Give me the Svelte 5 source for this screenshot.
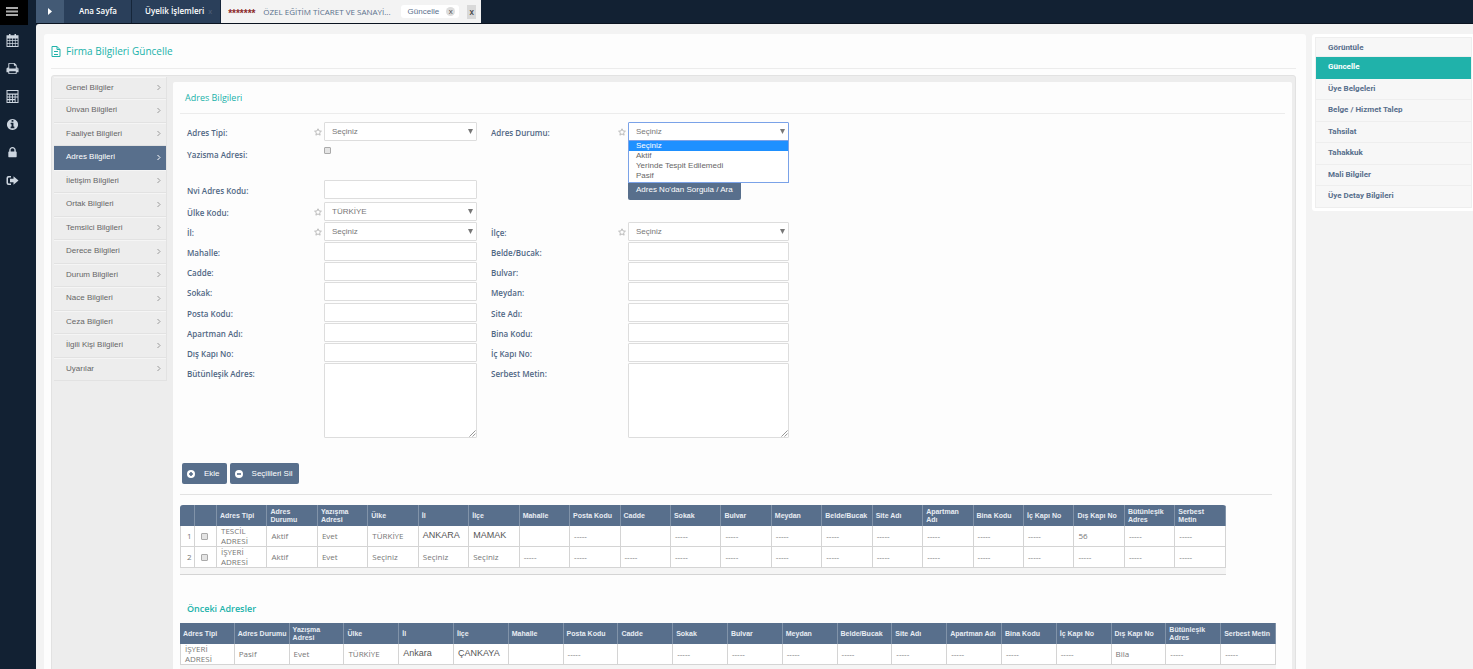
<script>
  const menu = [
    'Genel Bilgiler', 'Ünvan Bilgileri', 'Faaliyet Bilgileri', 'Adres Bilgileri',
    'İletişim Bilgileri', 'Ortak Bilgileri', 'Temsilci Bilgileri', 'Derece Bilgileri',
    'Durum Bilgileri', 'Nace Bilgileri', 'Ceza Bilgileri', 'İlgili Kişi Bilgileri', 'Uyarılar',
  ]

  const actions = [
    'Görüntüle', 'Güncelle', 'Üye Belgeleri', 'Belge / Hizmet Talep',
    'Tahsilat', 'Tahakkuk', 'Mali Bilgiler', 'Üye Detay Bilgileri',
  ]

  // one entry per grid row, left and right field
  const rows = [
    [{ label: 'Adres Tipi', type: 'select', required: true }, { label: 'Adres Durumu', type: 'select', required: true, open: true }],
    [{ label: 'Yazisma Adresi', type: 'checkbox' }, null],
    [{ label: 'Nvi Adres Kodu', type: 'text' }, { type: 'button' }],
    [{ label: 'Ülke Kodu', type: 'select', value: 'TÜRKİYE', required: true }, null],
    [{ label: 'İl', type: 'select', required: true }, { label: 'İlçe', type: 'select', required: true }],
    [{ label: 'Mahalle', type: 'text' }, { label: 'Belde/Bucak', type: 'text' }],
    [{ label: 'Cadde', type: 'text' }, { label: 'Bulvar', type: 'text' }],
    [{ label: 'Sokak', type: 'text' }, { label: 'Meydan', type: 'text' }],
    [{ label: 'Posta Kodu', type: 'text' }, { label: 'Site Adı', type: 'text' }],
    [{ label: 'Apartman Adı', type: 'text' }, { label: 'Bina Kodu', type: 'text' }],
    [{ label: 'Dış Kapı No', type: 'text' }, { label: 'İç Kapı No', type: 'text' }],
    [{ label: 'Bütünleşik Adres', type: 'textarea' }, { label: 'Serbest Metin', type: 'textarea' }],
  ]

  const statuses = ['Seçiniz', 'Aktif', 'Yerinde Tespit Edilemedi', 'Pasif']

  const columns = [
    'Adres Tipi', 'Adres Durumu', 'Yazışma Adresi', 'Ülke', 'İl', 'İlçe', 'Mahalle',
    'Posta Kodu', 'Cadde', 'Sokak', 'Bulvar', 'Meydan', 'Belde/Bucak', 'Site Adı',
    'Apartman Adı', 'Bina Kodu', 'İç Kapı No', 'Dış Kapı No', 'Bütünleşik Adres', 'Serbest Metin',
  ]

  const d = '-----'
  const current = [
    ['TESCİL ADRESİ', 'Aktif', 'Evet', 'TÜRKİYE', 'ANKARA', 'MAMAK', '', d, '', d, d, d, d, d, d, d, d, '56', d, d],
    ['İŞYERİ ADRESİ', 'Aktif', 'Evet', 'Seçiniz', 'Seçiniz', 'Seçiniz', d, d, d, d, d, d, d, d, d, d, d, d, d, d],
  ]
  const previous = [
    ['İŞYERİ ADRESİ', 'Pasif', 'Evet', 'TÜRKİYE', 'Ankara', 'ÇANKAYA', '', d, '', d, d, d, d, d, d, d, d, 'Bila', d, d],
  ]

  const isCity = (row, i) => (i === 4 || i === 5) && row[i] !== 'Seçiniz'
</script>

{#snippet field(f, id)}
  {#if f?.type === 'button'}
    <span></span><span></span>
    <div><button class="btn query">Adres No'dan Sorgula / Ara</button></div>
  {:else if f}
    <label for={id}>{f.label}:</label>
    <span class="star">
      {#if f.required}
        <svg viewBox="0 0 16 16"><path d="M8 1.5l2 4.4 4.8.5-3.6 3.2 1 4.7L8 11.9l-4.2 2.4 1-4.7L1.2 6.4 6 5.9z" /></svg>
      {/if}
    </span>
    <div class="control">
      {#if f.type === 'select'}
        <select {id} class:open={f.open}>
          {#if f.open}
            {#each statuses as status}<option>{status}</option>{/each}
          {:else}
            <option>{f.value ?? 'Seçiniz'}</option>
          {/if}
        </select>
        <svg class="caret" viewBox="0 0 6 6"><path d="M0 0h6L3 6z" /></svg>
        {#if f.open}
          <ul class="options">
            {#each statuses as status, i}
              <li class:selected={i === 0}>{status}</li>
            {/each}
          </ul>
        {/if}
      {:else if f.type === 'checkbox'}
        <input {id} type="checkbox" />
      {:else if f.type === 'textarea'}
        <textarea {id}></textarea>
        <svg class="grip" viewBox="0 0 8 8"><path d="M0.5 7.5l7-7M4 7.5l3.5-3.5" /></svg>
      {:else}
        <input {id} type="text" />
      {/if}
    </div>
  {:else}
    <span></span><span></span><span></span>
  {/if}
{/snippet}

{#snippet cells(row)}
  {#each row as value, i}
    <td class:city={isCity(row, i)}>{value}</td>
  {/each}
{/snippet}

<div class="app">
  <nav class="rail">
    <button class="burger" aria-label="Menü">
      <svg viewBox="0 0 12 9"><path d="M0 0h12v2H0zM0 3.5h12v2H0zM0 7h12v2H0z" /></svg>
    </button>
    <a href="#takvim" aria-label="Takvim">
      <svg viewBox="0 0 13 13"><path fill-rule="evenodd" d="M3 0h1.5v1.3h4V0H10v1.3h2.5V13H.5V1.3H3zM1.5 4.5v1.8h2V4.5zm2.7 0v1.8h2V4.5zm2.7 0v1.8h2V4.5zm2.7 0v1.8h2V4.5zM1.5 7.1v1.8h2V7.1zm2.7 0v1.8h2V7.1zm2.7 0v1.8h2V7.1zm2.7 0v1.8h2V7.1zM1.5 9.8V12h2V9.8zm2.7 0V12h2V9.8zm2.7 0V12h2V9.8zm2.7 0V12h2V9.8z" /></svg>
    </a>
    <a href="#yazdir" aria-label="Yazdır">
      <svg viewBox="0 0 1792 1792"><path d="M448 1536h896v-256h-896v256zm0-640h896v-384h-160q-40 0-68-28t-28-68v-160h-640v640zm1152 64q0-26-19-45t-45-19-45 19-19 45 19 45 45 19 45-19 19-45zm128 0v416q0 13-9.5 22.5t-22.5 9.5h-224v160q0 40-28 68t-68 28h-960q-40 0-68-28t-28-68v-160h-224q-13 0-22.5-9.5t-9.5-22.5v-416q0-79 56.5-135.5t135.5-56.5h64v-544q0-40 28-68t68-28h672q40 0 88 20t76 48l152 152q28 28 48 76t20 88v256h64q79 0 135.5 56.5t56.5 135.5z" /></svg>
    </a>
    <a href="#hesap" aria-label="Hesap">
      <svg viewBox="0 0 13 13"><path fill-rule="evenodd" d="M.5 0h12v13H.5zM1.5 1v2.5h10V1zM1.5 4.8v1.6h1.8V4.8zm2.7 0v1.6H6V4.8zm2.7 0v1.6h1.8V4.8zm2.7 0v1.6h1.9V4.8zM1.5 7.4V9h1.8V7.4zm2.7 0V9H6V7.4zm2.7 0V9h1.8V7.4zM1.5 10.2v1.7h1.8v-1.7zm2.7 0v1.7H6v-1.7zm2.7 0v1.7h1.8v-1.7zm2.7-2.8v4.5h1.9V7.4z" /></svg>
    </a>
    <a href="#bilgi" aria-label="Bilgi">
      <svg viewBox="0 0 1792 1792"><path d="M1152 1376v-160q0-14-9-23t-23-9h-96v-512q0-14-9-23t-23-9h-320q-14 0-23 9t-9 23v160q0 14 9 23t23 9h96v320h-96q-14 0-23 9t-9 23v160q0 14 9 23t23 9h448q14 0 23-9t9-23zm-128-896v-160q0-14-9-23t-23-9h-192q-14 0-23 9t-9 23v160q0 14 9 23t23 9h192q14 0 23-9t9-23zm640 416q0 209-103 385.5t-279.5 279.5-385.5 103-385.5-103-279.5-279.5-103-385.5 103-385.5 279.5-279.5 385.5-103 385.5 103 279.5 279.5 103 385.5z" /></svg>
    </a>
    <a href="#kilit" aria-label="Kilitle">
      <svg viewBox="0 0 1792 1792"><path d="M640 768h512v-192q0-106-75-181t-181-75-181 75-75 181v192zm832 96v576q0 40-28 68t-68 28h-960q-40 0-68-28t-28-68v-576q0-40 28-68t68-28h32v-192q0-184 132-316t316-132 316 132 132 316v192h32q40 0 68 28t28 68z" /></svg>
    </a>
    <a href="#cikis" aria-label="Çıkış">
      <svg viewBox="0 0 13 13"><path d="M5 2v1.5H3Q2 3.500 2 4.5v4q0 1 1 1h2V11H2.500Q.5 11 .5 9V4Q.5 2 2.500 2zM7.500 2.200l5 4.300-5 4.300V8.300H4V4.700h3.500z" /></svg>
    </a>
  </nav>

  <div class="page">
    <header>
      <button class="arrow" aria-label="İleri">
        <svg viewBox="0 0 4 7"><path d="M0 0l4 3.5L0 7z" /></svg>
      </button>
      <a href="#anasayfa">Ana Sayfa</a>
      <a class="wide" href="#uyelik">Üyelik İşlemleri <small>x</small></a>
      <div class="tab">
        <b>*******</b>
        <span class="firm">ÖZEL EĞİTİM TİCARET VE SANAYİ...</span>
        <span class="pill">Güncelle <button aria-label="Güncelle kapat">x</button></span>
        <button class="close">x</button>
      </div>
    </header>

    <div class="content">
      <main>
        <h1>
          <svg viewBox="0 0 10 11"><path d="M1 .5h5L9 3.500v7H1zM6 .5v3h3M3 5.500h4M3 8.500h4" /></svg>
          Firma Bilgileri Güncelle
        </h1>
        <div class="frame">
          <ul class="menu">
            {#each menu as item}
              <li class:active={item === 'Adres Bilgileri'}>
                <a href="#menu">{item}<svg viewBox="0 0 4 7"><path d="M.5 1l2.500 2.500L.5 6" /></svg></a>
              </li>
            {/each}
          </ul>

          <section>
            <h2>Adres Bilgileri</h2>
            <form>
              {#each rows as [left, right], i}
                {@render field(left, `l${i}`)}
                <span></span>
                {@render field(right, `r${i}`)}
              {/each}
            </form>

            <div class="buttons">
              <button class="btn">
                <svg viewBox="0 0 10 10"><circle cx="5" cy="5" r="5" /><path d="M2.500 5h5M5 2.500v5" /></svg>Ekle
              </button>
              <button class="btn">
                <svg viewBox="0 0 10 10"><circle cx="5" cy="5" r="5" /><path d="M2.500 5h5" /></svg>Seçilileri Sil
              </button>
            </div>

            <div class="grid current">
              <table>
                <thead>
                  <tr>
                    <th class="num"></th>
                    <th class="check"></th>
                    {#each columns as column}<th>{column}</th>{/each}
                  </tr>
                </thead>
                <tbody>
                  {#each current as row, i}
                    <tr>
                      <td>{i + 1}</td>
                      <td><input type="checkbox" aria-label="Satır {i + 1}" /></td>
                      {@render cells(row)}
                    </tr>
                  {/each}
                </tbody>
              </table>
            </div>

            <h3>Önceki Adresler</h3>
            <div class="grid">
              <table>
                <thead>
                  <tr>{#each columns as column}<th>{column}</th>{/each}</tr>
                </thead>
                <tbody>
                  {#each previous as row}
                    <tr>{@render cells(row)}</tr>
                  {/each}
                </tbody>
              </table>
            </div>
          </section>
        </div>
      </main>

      <aside>
        <ul>
          {#each actions as action}
            <li class:active={action === 'Güncelle'}><a href="#islem">{action}</a></li>
          {/each}
        </ul>
      </aside>
    </div>
  </div>
</div>

<style>
  :global(body) {
    background: #f3f3f3;
  }

  .app {
    display: flex;
    height: 100vh;
    overflow: hidden;
    background: #122133;
    font: 8px/10px 'Liberation Sans', Arial, sans-serif;
    color: #666;
  }

  .app :global(*) {
    box-sizing: border-box;
  }

  button,
  input,
  select,
  textarea {
    font: inherit;
    margin: 0;
  }

  button {
    border: 0;
    padding: 0;
  }

  a {
    color: inherit;
    text-decoration: none;
  }

  ul {
    list-style: none;
    margin: 0;
    padding: 0;
  }

  svg {
    display: block;
  }

  .rail {
    flex: none;
    width: 36px;
  }

  .burger {
    display: flex;
    width: 28px;
    height: 25px;
    padding: 7px 6px;
    background: #000;
  }

  .burger svg {
    width: 12px;
    height: 9px;
    fill: #aaa;
  }

  .rail a {
    display: flex;
    align-items: center;
    height: 28px;
    padding: 2px 6px 0;
  }

  .rail a svg {
    width: 13px;
    height: 13px;
    fill: #cdd6e0;
  }

  .page {
    flex: 1;
    min-width: 0;
    display: flex;
    flex-direction: column;
  }

  header {
    flex: none;
    display: flex;
    height: 24px;
    border-bottom: 1px solid #0a1320;
    color: #fff;
    font: 600 8px/22px 'Open Sans', sans-serif;
  }

  header > a {
    padding: 0 14px;
    background: #2a3f5a;
    border-right: 1px solid #16263a;
  }

  header > .wide {
    padding: 0 8px 0 13px;
  }

  header small {
    font-size: 7px;
    color: #4a5d76;
    margin-left: 2px;
  }

  .arrow {
    display: flex;
    align-items: center;
    width: 29px;
    padding-left: 12px;
    background: #435a75;
    border-right: 1px solid #2a3f5a;
  }

  .arrow svg {
    width: 4px;
    height: 7px;
    fill: #fff;
  }

  .tab {
    display: flex;
    align-items: center;
    width: 260px;
    padding: 0 5px 0 7px;
    background: #f3f3f3;
    color: #5a708c;
  }

  .tab b {
    width: 35px;
    padding-top: 4px;
    color: #8c2a2a;
    font: 700 10px/14px 'Liberation Sans', sans-serif;
  }

  .firm {
    font-weight: 400;
    white-space: nowrap;
    flex: 1;
  }

  .pill {
    display: flex;
    align-items: center;
    gap: 7px;
    height: 13px;
    margin-right: 8px;
    padding: 0 4px 0 7px;
    background: #fff;
    border-radius: 3px;
    font: 8px/13px 'Liberation Sans', sans-serif;
  }

  .pill button {
    width: 9px;
    height: 9px;
    border-radius: 50%;
    background: #ddd;
    color: #555;
    line-height: 8px;
  }

  .close {
    width: 9px;
    height: 14px;
    background: #d9d9d9;
    color: #444;
    line-height: 12px;
  }

  .content {
    flex: 1;
    min-height: 0;
    display: flex;
    align-items: flex-start;
    gap: 6px;
    padding: 10px 0 0 8px;
    background: #f3f3f3;
    border-top-left-radius: 3px;
  }

  main {
    flex: 1;
    min-width: 0;
    padding: 0 10px 20px 7px;
    background: #fdfdfd;
    border-radius: 3px;
  }

  h1 {
    display: flex;
    align-items: center;
    gap: 5px;
    height: 35px;
    margin: 0 0 6px;
    border-bottom: 1px solid #ececec;
    color: #20b2aa;
    font: 400 10px/34px 'Open Sans', sans-serif;
    -webkit-text-stroke: 0;
  }

  h1 svg {
    width: 10px;
    height: 11px;
    fill: none;
    stroke: #20b2aa;
  }

  .frame {
    display: flex;
    align-items: flex-start;
    gap: 6px;
    padding: 1px 3px 0 2px;
    background: #ededed;
    border: 1px solid #e2e2e2;
    border-radius: 3px;
  }

  .menu {
    flex: none;
    display: grid;
    grid-template-rows: 22px repeat(12, 1fr);
    width: 113px;
    height: 304px;
    border-right: 1px solid #e2e2e2;
  }

  .menu li {
    border-bottom: 1px solid #e2e2e2;
    box-shadow: inset 0 1px #f5f5f5;
  }

  .menu a {
    display: flex;
    align-items: center;
    justify-content: space-between;
    height: 100%;
    padding: 0 5px 0 12px;
  }

  .menu svg {
    width: 4px;
    height: 7px;
    fill: none;
    stroke: #999;
  }

  .menu .active {
    background: #586f8c;
    border-color: #586f8c;
    box-shadow: none;
    color: #fff;
  }

  .menu .active svg {
    stroke: #fff;
  }

  section {
    flex: 1;
    min-width: 0;
    margin-top: 5px;
    padding: 0 7px 20px;
    background: #fdfdfd;
    border-radius: 2px;
  }

  h2 {
    margin: 0 0 8px;
    padding-left: 5px;
    border-bottom: 1px solid #ececec;
    color: #20b2aa;
    font: 400 9px/31px 'Open Sans', sans-serif;
  }

  form {
    display: grid;
    grid-template-columns: 127px 10px 153px 14px 127px 10px 161px;
    grid-template-rows: 22px 36px 22px 20px 20px 20px 20px 21px 20px 20px 20px 75px;
    padding-left: 7px;
  }

  label {
    padding-top: 5px;
    color: #506784;
    font: 600 8px/12px 'Open Sans', sans-serif;
  }

  .star svg {
    width: 8px;
    height: 8px;
    margin-top: 6px;
    fill: none;
    stroke: #bbb;
    stroke-width: 2;
  }

  .control {
    position: relative;
    display: flex;
    align-items: flex-start;
  }

  input[type='text'],
  select,
  textarea {
    width: 100%;
    height: 19px;
    padding: 0 7px;
    appearance: none;
    background: #fff;
    border: 1px solid #ddd;
    border-radius: 1px;
    color: #777;
    outline: none;
  }

  textarea {
    height: 75px;
    resize: none;
  }

  select.open {
    border-color: #7aa2e8;
  }

  input[type='checkbox'] {
    width: 7px;
    height: 7px;
    appearance: none;
    background: #e4e4e4;
    border: 1px solid #aaa;
    border-radius: 1px;
  }

  .control input[type='checkbox'] {
    margin-top: 3px;
  }

  .caret {
    position: absolute;
    top: 7px;
    right: 4px;
    width: 5px;
    height: 5px;
    fill: #777;
  }

  .grip {
    position: absolute;
    right: 1px;
    bottom: 1px;
    width: 7px;
    height: 7px;
    fill: none;
    stroke: #888;
  }

  .options {
    position: absolute;
    z-index: 1;
    top: 18px;
    left: 0;
    right: 0;
    padding-bottom: 1px;
    background: #fff;
    border: 1px solid #7aa2e8;
  }

  .options li {
    padding-left: 7px;
  }

  .options .selected {
    background: #1e90ff;
    color: #fff;
  }

  .btn {
    display: flex;
    align-items: center;
    height: 21px;
    padding: 0 7px 0 5px;
    background: #586f8c;
    border-radius: 2px;
    color: #fff;
  }

  .btn svg {
    width: 8px;
    height: 8px;
    margin-right: 9px;
    fill: #fff;
    stroke: #586f8c;
    stroke-width: 2;
  }

  .btn circle {
    stroke: none;
  }

  .query {
    height: 20px;
    padding: 0 8px;
  }

  .buttons {
    display: flex;
    gap: 3px;
    margin: 25px 13px 10px 0;
    padding: 0 0 10px 2px;
    border-bottom: 1px solid #e2e2e2;
  }

  h3 {
    margin: 24px 0 4px;
    padding-left: 7px;
    color: #20b2aa;
    font: 600 9px/20px 'Open Sans', sans-serif;
  }

  .grid {
    margin-right: 9px;
    padding-bottom: 6px;
    background: #f5f5f5;
    border-bottom: 1px solid #d4d4d4;
  }

  .grid.current {
    margin-right: 59px;
    border-radius: 3px 3px 0 0;
    overflow: hidden;
  }

  table {
    width: 100%;
    table-layout: fixed;
    border-collapse: separate;
    border-spacing: 0;
    background: #fff;
  }

  th {
    height: 21px;
    padding: 0 0 0 3px;
    background: #586f8c;
    border-right: 1px solid #8193a9;
    color: #e8edf3;
    font-size: 7px;
    line-height: 8px;
    text-align: left;
  }

  .current th {
    padding-right: 4px;
  }

  td {
    height: 21px;
    padding: 0 8px 0 4px;
    border: solid #d4d4d4;
    border-width: 0 1px 1px 0;
    color: #777;
    font-family: 'Open Sans', sans-serif;
  }

  td:first-child {
    border-left-width: 1px;
  }

  td.city {
    padding: 0 0 3px 4px;
    color: #555;
    font: 9px/10px 'Liberation Sans', sans-serif;
  }

  .num {
    width: 15px;
  }

  .check {
    width: 22px;
  }

  .current td:nth-child(-n + 2) {
    padding: 0 0 0 6px;
  }

  td input {
    display: block;
  }

  aside {
    flex: none;
    width: 161px;
    padding: 3px 1px 3px 3px;
    background: #fff;
    border-radius: 3px 0 0 3px;
  }

  aside ul {
    display: grid;
    grid-template-rows: 19px repeat(7, 1fr);
    height: 171px;
    background: #f7f7f7;
    border: 1px solid #eee;
    border-bottom: 0;
  }

  aside li {
    padding-left: 12px;
    border-bottom: 1px solid #eee;
    color: #586f8c;
    font: 700 8px/20px Roboto, sans-serif;
  }

  aside .active {
    background: #20b2aa;
    border-color: #20b2aa;
    color: #fff;
  }
</style>
